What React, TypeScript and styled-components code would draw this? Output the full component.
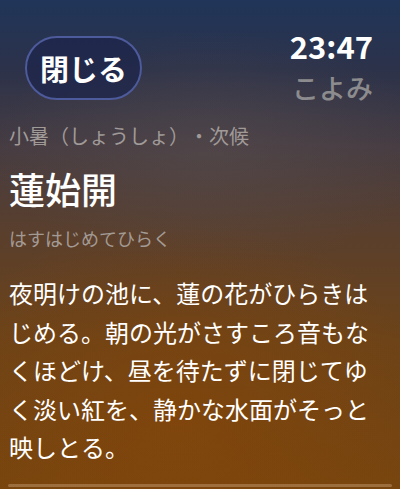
import React from "react";
import styled, { createGlobalStyle } from "styled-components";

const GlobalStyle = createGlobalStyle`
  html, body {
    margin: 0;
    padding: 0;
    background: #3a2a20;
  }
  body {
    font-family: "Noto Sans CJK JP", "Noto Sans", sans-serif;
    text-spacing-trim: space-all;
  }
`;

const Screen = styled.div`
  position: relative;
  width: 400px;
  height: 489px;
  overflow: hidden;
  box-sizing: border-box;
  padding: 0 9px;
  background:
    radial-gradient(ellipse 220px 120px at 210px 150px, rgba(90, 80, 80, 0.45), rgba(90, 80, 80, 0) 100%),
    radial-gradient(ellipse 260px 200px at 180px 420px, rgba(140, 70, 5, 0.5), rgba(140, 70, 5, 0) 100%),
    linear-gradient(180deg, #203559 0%, #2c324a 14%, #463c42 30%, #5a3f2c 48%, #6c4318 70%, #77450f 100%);
`;

const Header = styled.header`
  display: flex;
  justify-content: space-between;
  align-items: flex-start;
`;

const CloseButton = styled.button`
  margin: 36px 0 0 16px;
  width: 117px;
  height: 64px;
  box-sizing: border-box;
  border-radius: 32px;
  border: 2px solid #4d5a9c;
  background: rgba(30, 38, 75, 0.75);
  color: #ffffff;
  font-family: inherit;
  font-size: 29px;
  font-weight: 700;
  padding: 0;
  line-height: 1;
`;

const Clock = styled.div`
  margin: 26px 18px 0 0;
  display: flex;
  flex-direction: column;
  align-items: flex-end;
`;

const Time = styled.div`
  color: #ffffff;
  font-size: 31px;
  font-weight: 700;
  line-height: 40px;
`;

const AppName = styled.div`
  margin-top: 4px;
  color: #8c8c8e;
  font-size: 27px;
  font-weight: 500;
  line-height: 36px;
`;

const Season = styled.div`
  margin-top: 16px;
  color: #a09a98;
  font-size: 20px;
  line-height: 28px;
`;

const Title = styled.h1`
  margin: 16px 0 0;
  color: #ffffff;
  font-size: 36px;
  font-weight: 500;
  line-height: 44px;
`;

const Reading = styled.div`
  margin-top: 15px;
  color: #a39a94;
  font-size: 18px;
  line-height: 26px;
`;

const Description = styled.p`
  margin: 23px 0 0;
  color: #ffffff;
  font-size: 24px;
  line-height: 38.5px;
  font-weight: 400;
`;

const BottomBar = styled.div`
  position: absolute;
  left: 8px;
  right: 8px;
  bottom: 2px;
  height: 3px;
  border-radius: 2px;
  background: rgba(200, 160, 120, 0.45);
`;

export default function App() {
  return (
    <>
      <GlobalStyle />
      <Screen>
        <Header>
          <CloseButton>閉じる</CloseButton>
          <Clock>
            <Time>23:47</Time>
            <AppName>こよみ</AppName>
          </Clock>
        </Header>
        <Season>小暑（しょうしょ）・次候</Season>
        <Title>蓮始開</Title>
        <Reading>はすはじめてひらく</Reading>
        <Description>
          夜明けの池に、蓮の花がひらきはじめる。朝の光がさすころ音もなくほどけ、昼を待たずに閉じてゆく淡い紅を、静かな水面がそっと映しとる。
        </Description>
        <BottomBar />
      </Screen>
    </>
  );
}
